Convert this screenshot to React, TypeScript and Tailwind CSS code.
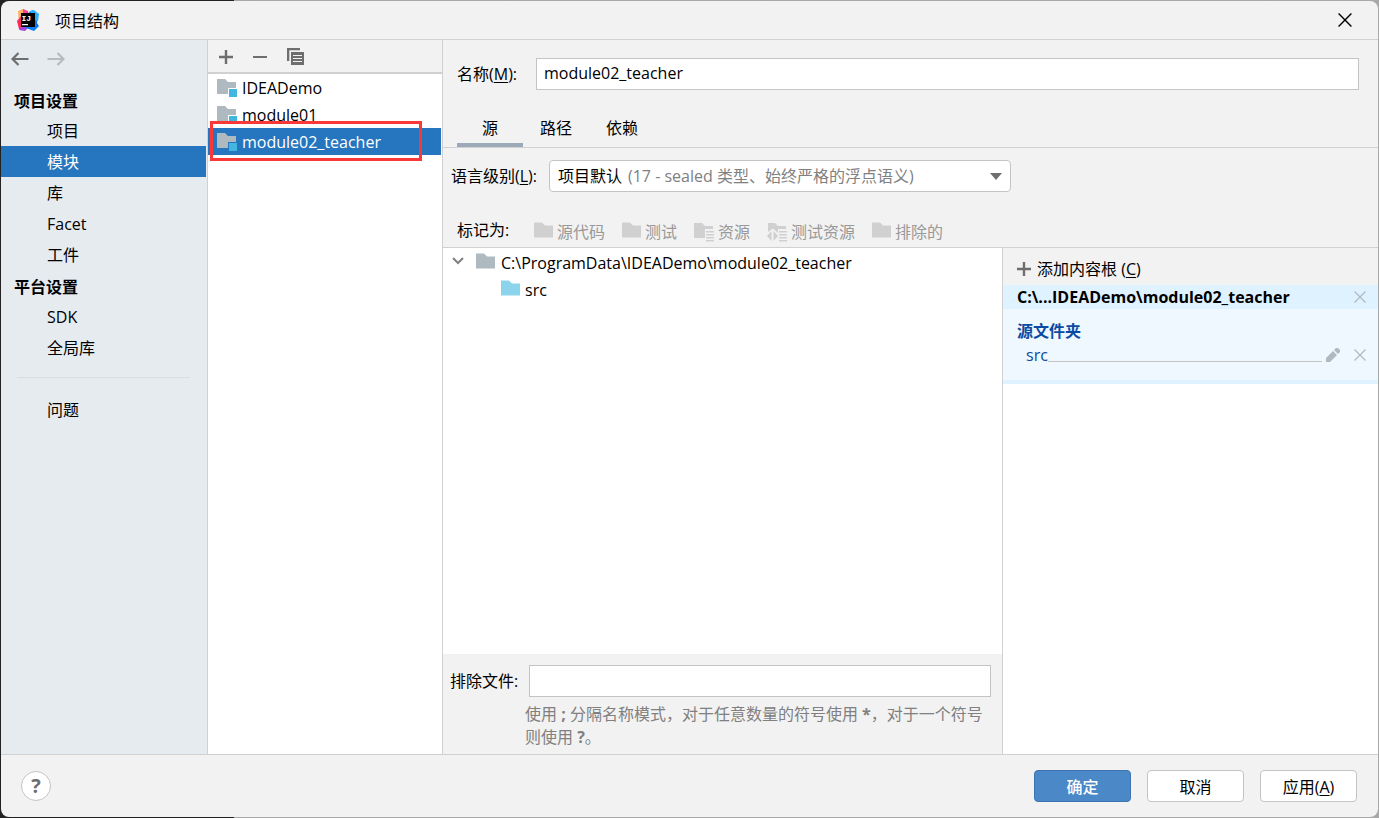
import React, { useState } from 'react';

const sections = [
  { title: '项目设置', items: ['项目', '模块', '库', 'Facet', '工件'] },
  { title: '平台设置', items: ['SDK', '全局库'] },
];

const modules = ['IDEADemo', 'module01', 'module02_teacher'];

const tabs = ['源', '路径', '依赖'];

const FolderIcon = ({ className }: { className: string }) => (
  <svg viewBox="0 0 20 16" fill="currentColor" className={`w-5 h-4 shrink-0 ${className}`}>
    <path d="M0 .5h8l3 3h8v12H0z" />
  </svg>
);

const ModuleIcon = () => (
  <svg viewBox="0 0 22 20" className="w-[22px] h-5 shrink-0">
    <path d="M0 1h8l3 3h8v6h-8v6H0z" fill="#afb9c0" />
    <rect x="12" y="11" width="8" height="8" fill="#40b6e0" />
  </svg>
);

const ResourceIcon = ({ test }: { test?: boolean }) => (
  <svg viewBox="0 0 21 20" fill="#d0d0d0" className="w-[21px] h-5 shrink-0">
    {test ? (
      <>
        <path d="M1 1h7l3 3h8v3h-8v4L6 6.500 1 10z" />
        <path d="M4.500 9v10L0 14zM6.500 9v10l4.500-5z" />
      </>
    ) : (
      <path d="M0 1h8l3 3h8v3h-8v9H0z" />
    )}
    <path d="M12 9h8v1.500h-8zM12 12h8v1.500h-8zM12 15h8v1.500h-8zM12 18h8v1.500h-8z" />
  </svg>
);

const PlusIcon = () => (
  <svg viewBox="0 0 14 14" className="w-3.5 h-3.5 shrink-0" fill="#6e6e6e">
    <path d="M5.800 0h2.400v5.800H14v2.400H8.200V14H5.800V8.200H0V5.800h5.800z" />
  </svg>
);

const ArrowIcon = ({ className }: { className: string }) => (
  <svg viewBox="0 0 18 14" className={`w-[18px] h-3.5 ${className}`} fill="none" stroke="currentColor" strokeWidth="2.200">
    <path d="M17.500 7H2M7.500 1l-6 6 6 6" />
  </svg>
);

const CloseIcon = ({ className }: { className: string }) => (
  <svg viewBox="0 0 12 12" className={className} fill="none" stroke="currentColor" strokeWidth="1.200">
    <path d="M.5.5l11 11M11.500.5l-11 11" />
  </svg>
);

const Logo = () => (
  <svg viewBox="0 0 22 22" className="w-[22px] h-[22px]">
    <path d="M1 2l5-2 5 3-2 9-7 2z" fill="#fdb060" />
    <path d="M0 12l4-5 6 8-3 6-5-1z" fill="#fe2857" />
    <path d="M6 0l5 2 2 12-7-6z" fill="#f73e9a" />
    <path d="M4 18h8l-4 4-6-1z" fill="#a544d8" />
    <path d="M12 3l4-2 5 5-1 8 2 3-5 5-8-3z" fill="#087cfa" />
    <path d="M13 2l4-1 5 4-1 7-4-1z" fill="#2fb0fc" />
    <path d="M4 4h14v14H4z" />
    <path d="M5 15h6v1.200H5z" fill="#fff" />
    <text x="4.500" y="11.500" fill="#fff" fontSize="8" fontWeight="700" fontFamily="Liberation Mono, monospace">IJ</text>
  </svg>
);

const markers = [
  { label: '源代码', icon: <FolderIcon className="mb-1 text-[#d0d0d0]" /> },
  { label: '测试', icon: <FolderIcon className="mb-1 text-[#d0d0d0]" /> },
  { label: '资源', icon: <ResourceIcon /> },
  { label: '测试资源', icon: <ResourceIcon test /> },
  { label: '排除的', icon: <FolderIcon className="mb-1 text-[#d0d0d0]" /> },
];

const Sidebar = () => {
  const [active, setActive] = useState('模块');

  return (
    <nav className="w-[207px] shrink-0 flex flex-col pr-px bg-[#e6ebf0] border-r border-[#d1d1d1]">
      <div className="h-11 flex items-start gap-[18px] pt-3 pl-2.5">
        <button aria-label="后退"><ArrowIcon className="text-[#6e6e6e]" /></button>
        <button aria-label="前进"><ArrowIcon className="text-[#b8bbbe] rotate-180" /></button>
      </div>
      {sections.map((section) => (
        <div key={section.title} className="flex flex-col">
          <h2 className="h-[31px] leading-[34px] pl-[13px] font-bold">{section.title}</h2>
          {section.items.map((item) => (
            <button
              key={item}
              onClick={() => setActive(item)}
              className={`h-[31px] pl-[46px] text-left ${active === item ? 'bg-[#2675bf] text-white' : ''}`}
            >
              {item}
            </button>
          ))}
        </div>
      ))}
      <hr className="mx-4 mt-3.5 mb-4 border-[#d8dde2]" />
      <button className="h-[31px] pl-[46px] text-left">问题</button>
    </nav>
  );
};

const ModuleList = () => {
  const [selected, setSelected] = useState('module02_teacher');

  return (
    <div className="w-[235px] shrink-0 flex flex-col bg-white border-r border-[#d1d1d1]">
      <div className="h-[34px] shrink-0 flex items-center gap-5 pl-[11px] pt-px bg-[#f2f2f2] border-b-2 border-[#d1d1d1]">
        <button aria-label="添加"><PlusIcon /></button>
        <button aria-label="移除" className="py-1.5"><div className="w-3.5 h-0.5 bg-[#6e6e6e]" /></button>
        <button aria-label="复制">
          <svg viewBox="0 0 17 17" className="w-[17px] h-[17px]" fill="#6e6e6e">
            <path d="M0 0h13v2.300H2.300V13H0z" />
            <path d="M4 4h13v13H4zM6 7v1h9V7zM6 10v1h9v-1zM6 13v1h9v-1z" fillRule="evenodd" />
          </svg>
        </button>
      </div>
      <div className="flex flex-col pr-px">
        {modules.map((name) => (
          <button
            key={name}
            onClick={() => setSelected(name)}
            className={`relative h-[27px] flex items-center gap-[3px] pl-[9px] ${selected === name ? 'bg-[#2675bf] text-white' : ''}`}
          >
            <ModuleIcon />
            {name}
            {name === 'module02_teacher' && (
              <span className="absolute left-0.5 -top-[7px] w-[212px] h-10 border-3 border-[#fa3838]" />
            )}
          </button>
        ))}
      </div>
    </div>
  );
};

const ContentRoots = () => (
  <aside className="w-[376px] shrink-0 bg-white border-l border-[#d1d1d1]">
    <button className="w-full h-[37px] flex items-center gap-1.5 pl-3.5 pt-1 bg-[#f2f2f2]">
      <PlusIcon />
      <span>添加内容根 (<u className="underline-offset-2">C</u>)</span>
    </button>
    <div className="h-6 flex items-center justify-between pl-3.5 pr-3 bg-[#dff2ff] font-bold">
      C:\...IDEADemo\module02_teacher
      <button aria-label="移除内容根"><CloseIcon className="w-3 h-3 text-[#afb9c0]" /></button>
    </div>
    <div className="h-[75px] pt-2.5 pl-3.5 pr-3 bg-[#f0f8ff] border-b-4 border-[#dff2ff] text-[#0b4ba3]">
      <h3 className="font-bold">源文件夹</h3>
      <div className="flex items-center pl-[9px]">
        src
        <div className="flex-1 h-3.5 border-b border-[#c4c4c4]" />
        <button aria-label="编辑" className="ml-1 mr-3.5">
          <svg viewBox="0 0 14 14" className="w-3.5 h-3.5" fill="#afb9c0">
            <path d="M0 14v-4l7-7 4 4-7 7zM8 2l2-2h2l2 2v2l-2 2z" />
          </svg>
        </button>
        <button aria-label="移除"><CloseIcon className="w-3 h-3 text-[#afb9c0]" /></button>
      </div>
    </div>
  </aside>
);

const ModuleEditor = () => {
  const [tab, setTab] = useState('源');
  const [name, setName] = useState('module02_teacher');

  return (
    <main className="flex-1 min-w-0 flex flex-col">
      <div className="flex items-center pt-[18px] pl-3.5 pr-[19px]">
        <label htmlFor="name" className="w-[79px]">名称(<u className="underline-offset-2">M</u>):</label>
        <input
          id="name"
          value={name}
          onChange={(e) => setName(e.target.value)}
          className="flex-1 h-8 px-[7px] pb-0.5 bg-white border border-[#c4c4c4] outline-none"
        />
      </div>

      {/* Tabs */}
      <div className="h-[58px] flex items-end pl-3.5 border-b border-[#d1d1d1]">
        {tabs.map((t) => (
          <button
            key={t}
            onClick={() => setTab(t)}
            className={`w-[66px] h-[38px] pt-1 border-b-4 ${tab === t ? 'border-[#9ca9b9]' : 'border-transparent'}`}
          >
            {t}
          </button>
        ))}
      </div>

      <div className="flex items-center pt-3 pl-2">
        <label htmlFor="level" className="w-[98px]">语言级别(<u className="underline-offset-2">L</u>):</label>
        <div className="relative w-[462px]">
          <select id="level" className="w-full h-8 px-2 bg-white border border-[#c4c4c4] rounded-sm appearance-none outline-none">
            <option>项目默认</option>
          </select>
          <span className="absolute inset-y-0 left-[79px] right-[9px] flex items-center justify-between text-[#808080] pointer-events-none">
            (17 - sealed 类型、始终严格的浮点语义)
            <svg viewBox="0 0 12 7" className="w-3 h-[7px]" fill="#6e6e6e"><path d="M0 0h12L6 7z" /></svg>
          </span>
        </div>
      </div>

      <div className="h-[56px] flex items-center pt-5 pl-3.5 border-b border-[#d1d1d1]">
        <span className="w-[77px]">标记为:</span>
        <div className="flex gap-[17px] pt-1 text-[#999999]">
          {markers.map((m) => (
            <button key={m.label} disabled className="flex items-center gap-[3px]">
              {m.icon}
              {m.label}
            </button>
          ))}
        </div>
      </div>

      <div className="flex-1 flex min-h-0">
        <div className="flex-1 min-w-0 flex flex-col">
          <div className="flex-1 pt-px bg-white">
            <div className="h-[27px] flex items-center pl-[9px]">
              <svg viewBox="0 0 12 8" className="w-3 h-2 mr-3 mb-1" fill="none" stroke="#808080" strokeWidth="2">
                <path d="M1 1l5 5 5-5" />
              </svg>
              <FolderIcon className="mr-[5px] mb-1 text-[#afb9c0]" />
              C:\ProgramData\IDEADemo\module02_teacher
            </div>
            <div className="h-[27px] flex items-center pl-[58px]">
              <FolderIcon className="mr-1 mb-1 text-[#8cd3ec]" />
              src
            </div>
          </div>
          <div className="pt-[11px] pl-[7px] pr-[11px] pb-[5px]">
            <div className="flex items-center">
              <label htmlFor="exclude" className="w-[79px]">排除文件:</label>
              <input id="exclude" className="flex-1 h-8 px-2 bg-white border border-[#c4c4c4] outline-none" />
            </div>
            <p className="pt-1.5 pl-[75px] leading-[23px] text-[#808080]">
              使用 <b>;</b> 分隔名称模式，对于任意数量的符号使用 <b>*</b>，对于一个符号则使用 <b>?</b>。
            </p>
          </div>
        </div>
        <ContentRoots />
      </div>
    </main>
  );
};

const App: React.FC = () => {
  return (
    <div className="h-screen p-px bg-linear-to-r from-[#222222] from-17% to-[#a8a8a8] to-17% text-base text-black font-['Open_Sans','Noto_Sans_CJK_SC',sans-serif]">
      <div className="h-full flex flex-col bg-[#f2f2f2] rounded-lg overflow-hidden">
        {/* Title bar */}
        <header className="h-[39px] shrink-0 flex items-center pl-4 pr-[26px] border-b border-[#d1d1d1]">
          <Logo />
          <h1 className="flex-1 pl-4 pt-0.5">项目结构</h1>
          <button aria-label="关闭"><CloseIcon className="w-3.5 h-3.5 text-black" /></button>
        </header>

        <div className="flex-1 min-h-0 flex">
          <Sidebar />
          <ModuleList />
          <ModuleEditor />
        </div>

        {/* Footer */}
        <footer className="h-[63px] shrink-0 flex items-center gap-4 pl-5 pr-[21px] border-t border-[#d1d1d1]">
          <button className="w-[30px] h-[30px] mr-auto bg-white border border-[#c4c4c4] rounded-full text-xl leading-7 font-bold text-[#6e6e6e]">?</button>
          <button className="w-[97px] h-8 pt-0.5 bg-[#4a88c7] border border-[#3d75b1] rounded text-white font-medium">确定</button>
          <button className="w-[97px] h-8 pt-0.5 bg-white border border-[#c4c4c4] rounded">取消</button>
          <button className="w-[97px] h-8 pt-0.5 bg-white border border-[#c4c4c4] rounded">应用(<u className="underline-offset-2">A</u>)</button>
        </footer>
      </div>
    </div>
  );
};

export default App;
